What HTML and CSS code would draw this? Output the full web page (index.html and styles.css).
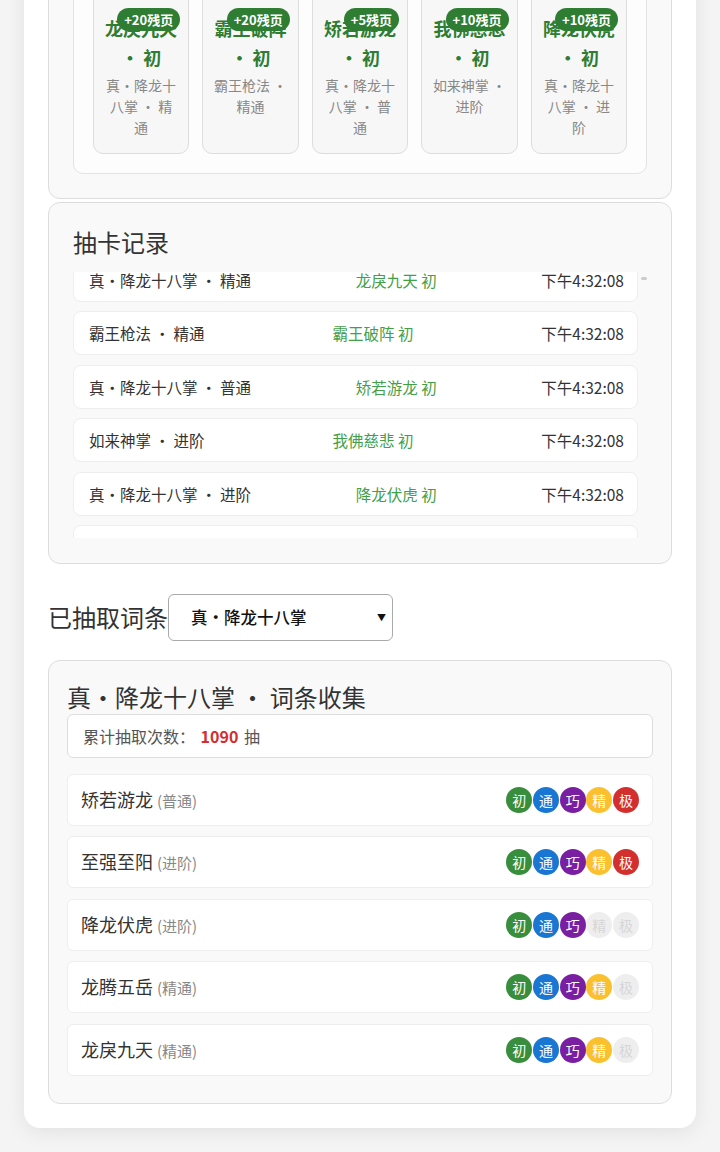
FILE: index.html
```html
<!DOCTYPE html>
<html lang="zh-CN">

<head>
    <meta charset="UTF-8">
    <meta name="viewport" content="width=device-width, initial-scale=1.0">
    <title>抽卡模拟</title>
    <link rel="stylesheet" href="styles.css">
</head>

<body>
    <div class="app">
        <!-- Latest ten-pull results -->
        <section class="panel results">
            <h2>抽卡结果</h2>
            <div class="card-grid">
                <div class="card">
                    <span class="badge">+20残页</span>
                    <div class="card-name">龙戾九天 ・ 初</div>
                    <div class="card-set">真・降龙十八掌 ・ 精通</div>
                </div>
                <div class="card">
                    <span class="badge">+20残页</span>
                    <div class="card-name">霸王破阵 ・ 初</div>
                    <div class="card-set">霸王枪法 ・ 精通</div>
                </div>
                <div class="card">
                    <span class="badge">+5残页</span>
                    <div class="card-name">矫若游龙 ・ 初</div>
                    <div class="card-set">真・降龙十八掌 ・ 普通</div>
                </div>
                <div class="card">
                    <span class="badge">+10残页</span>
                    <div class="card-name">我佛慈悲 ・ 初</div>
                    <div class="card-set">如来神掌 ・ 进阶</div>
                </div>
                <div class="card">
                    <span class="badge">+10残页</span>
                    <div class="card-name">降龙伏虎 ・ 初</div>
                    <div class="card-set">真・降龙十八掌 ・ 进阶</div>
                </div>
            </div>
        </section>

        <!-- Draw history -->
        <section class="panel log">
            <h2>抽卡记录</h2>
            <div class="log-list" id="log-list">
                <div class="log-row"><span>真・降龙十八掌 ・ 精通</span><span class="log-item">龙戾九天 初</span><span>下午4:32:08</span></div>
                <div class="log-row"><span>霸王枪法 ・ 精通</span><span class="log-item">霸王破阵 初</span><span>下午4:32:08</span></div>
                <div class="log-row"><span>真・降龙十八掌 ・ 普通</span><span class="log-item">矫若游龙 初</span><span>下午4:32:08</span></div>
                <div class="log-row"><span>如来神掌 ・ 进阶</span><span class="log-item">我佛慈悲 初</span><span>下午4:32:08</span></div>
                <div class="log-row"><span>真・降龙十八掌 ・ 进阶</span><span class="log-item">降龙伏虎 初</span><span>下午4:32:08</span></div>
                <div class="log-row"><span>真・降龙十八掌 ・ 进阶</span><span class="log-item">至强至阳 初</span><span>下午4:31:52</span></div>
            </div>
        </section>

        <div class="picker">
            <label for="set-select">已抽取词条</label>
            <span class="select-wrap">
                <select id="set-select">
                    <option>真・降龙十八掌</option>
                    <option>霸王枪法</option>
                    <option>如来神掌</option>
                </select>
            </span>
        </div>

        <!-- Collected entries for the selected set -->
        <section class="panel collection">
            <h2>真・降龙十八掌 ・ 词条收集</h2>
            <div class="stats">累计抽取次数： <strong>1090</strong> 抽</div>

            <div class="entry">
                <span class="entry-name">矫若游龙 <small>(普通)</small></span>
                <span class="tiers"><i class="t1">初</i><i class="t2">通</i><i class="t3">巧</i><i class="t4">精</i><i class="t5">极</i></span>
            </div>
            <div class="entry">
                <span class="entry-name">至强至阳 <small>(进阶)</small></span>
                <span class="tiers"><i class="t1">初</i><i class="t2">通</i><i class="t3">巧</i><i class="t4">精</i><i class="t5">极</i></span>
            </div>
            <div class="entry">
                <span class="entry-name">降龙伏虎 <small>(进阶)</small></span>
                <span class="tiers"><i class="t1">初</i><i class="t2">通</i><i class="t3">巧</i><i class="off">精</i><i class="off">极</i></span>
            </div>
            <div class="entry">
                <span class="entry-name">龙腾五岳 <small>(精通)</small></span>
                <span class="tiers"><i class="t1">初</i><i class="t2">通</i><i class="t3">巧</i><i class="t4">精</i><i class="off">极</i></span>
            </div>
            <div class="entry">
                <span class="entry-name">龙戾九天 <small>(精通)</small></span>
                <span class="tiers"><i class="t1">初</i><i class="t2">通</i><i class="t3">巧</i><i class="t4">精</i><i class="off">极</i></span>
            </div>
        </section>
    </div>

    <script src="script.js"></script>
</body>

</html>
```

FILE: styles.css
```css
body {
    margin: 0;
    padding: 24px;
    background: #f4f4f4;
    font-family: "Noto Sans CJK SC", "Noto Sans", sans-serif;
    color: #333;
}

.app {
    background: #fff;
    border-radius: 16px;
    padding: 24px;
    box-shadow: 0 4px 20px rgba(0, 0, 0, 0.08);
}

.panel {
    background: #f9f9f9;
    border: 1px solid #ddd;
    border-radius: 12px;
    padding: 24px;
}

.panel h2 {
    margin: 0 0 10px;
    font-size: 24px;
    font-weight: normal;
    line-height: 36px;
}

/* Result cards */
.results {
    margin-bottom: 3px;
}

.card-grid {
    display: grid;
    grid-template-columns: repeat(5, 1fr);
    gap: 13.25px;
    padding: 19px;
    background: #fdfdfd;
    border: 1px solid #e3e3e3;
    border-radius: 10px;
}

.card {
    position: relative;
    padding: 28px 10px 14.5px;
    background: #f7f7f7;
    border: 1px solid #ddd;
    border-radius: 10px;
    text-align: center;
}

.card .badge {
    position: absolute;
    top: 21.5px;
    right: 8px;
    padding: 2px 7px;
    background: #2e7d32;
    color: #fff;
    font-size: 13px;
    font-weight: bold;
    line-height: 19px;
    border-radius: 12px;
}

.card-name {
    font-size: 18px;
    font-weight: bold;
    line-height: 29px;
    color: #2e7d32;
}

.card-set {
    margin-top: 3px;
    font-size: 14px;
    line-height: 21px;
    color: #888;
}

/* Draw history */
.log {
    position: relative;
    padding-top: 21px;
    padding-bottom: 25px;
}

.log h2 {
    margin-bottom: 12px;
}

/* scroll thumb of the history list */
.log::after {
    content: "";
    position: absolute;
    top: 74px;
    right: 24px;
    width: 6px;
    height: 3px;
    border-radius: 2px;
    background: #ccc;
}

.log-list {
    height: 266px;
    overflow-y: auto;
    padding-right: 9px;
    scrollbar-width: none;
}

.log-row {
    display: flex;
    justify-content: space-between;
    align-items: center;
    box-sizing: border-box;
    height: 44px;
    padding: 0 13px 0 15px;
    margin-bottom: 9.5px;
    background: #fff;
    border: 1px solid #eee;
    border-radius: 8px;
    font-size: 15.5px;
}

.log-item {
    color: #43a047;
}

/* Set picker */
.picker {
    display: flex;
    align-items: center;
    margin: 30px 0 19px;
}

.picker label {
    font-size: 24px;
    line-height: 36px;
}

.select-wrap {
    position: relative;
    display: block;
}

.select-wrap::after {
    content: "▼";
    position: absolute;
    right: 7px;
    top: 50%;
    transform: translateY(-50%);
    font-size: 9px;
    color: #111;
    pointer-events: none;
}

.picker select {
    appearance: none;
    display: block;
    width: 225px;
    height: 47px;
    padding: 0 20px 0 22px;
    border: 1px solid #aaa;
    border-radius: 6px;
    background: #fff;
    font-family: "Noto Sans CJK SC", sans-serif;
    font-size: 16.5px;
    font-weight: 500;
    color: #111;
}

/* Collection */
.collection {
    padding: 18px 18px 17px;
}

.collection h2 {
    margin: 0;
    line-height: 35px;
}

.stats {
    margin-bottom: 16px;
    padding: 10px 15px;
    line-height: 22px;
    background: #fff;
    border: 1px solid #ddd;
    border-radius: 6px;
    font-size: 16px;
    color: #555;
}

.stats strong {
    margin: 0 2px;
    color: #d32f2f;
}

.entry {
    display: flex;
    justify-content: space-between;
    align-items: center;
    padding: 12px 13px;
    margin-bottom: 10.5px;
    background: #fff;
    border: 1px solid #eee;
    border-radius: 6px;
}

.entry-name {
    font-size: 18px;
    line-height: 25px;
}

.entry-name small {
    font-size: 15px;
    color: #888;
}

.tiers {
    display: flex;
}

.tiers i {
    display: flex;
    align-items: center;
    justify-content: center;
    width: 26px;
    height: 26px;
    margin-left: 0.7px;
    border-radius: 50%;
    font-style: normal;
    font-size: 14px;
    color: #fff;
}

.tiers .t1 { background: #388e3c; }
.tiers .t2 { background: #1976d2; }
.tiers .t3 { background: #7b1fa2; }
.tiers .t4 { background: #fbc02d; }
.tiers .t5 { background: #d32f2f; }

.tiers .off {
    background: #eee;
    color: #d6d6d6;
}
```

FILE: script.js
```js
// History list is shown scrolled a little past the newest draw
document.getElementById('log-list').scrollTop = 14;

// Page is viewed scrolled down to the collection
window.scrollTo(0, document.documentElement.scrollHeight);
```
